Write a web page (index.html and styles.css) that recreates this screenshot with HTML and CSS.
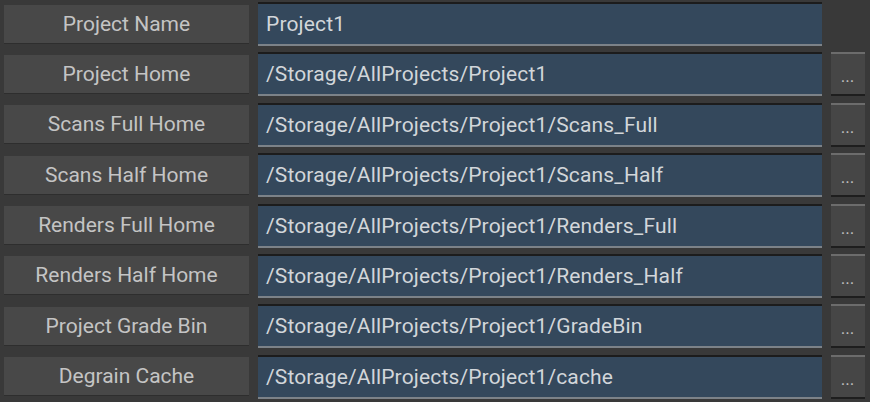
FILE: index.html
```html
<!DOCTYPE html>
<html lang="en">
<head>
<meta charset="UTF-8" />
<title>Project Settings</title>
<link rel="stylesheet" href="styles.css">
</head>
<body>
  <div class="settings">
    <div class="row">
      <div class="label">Project Name</div>
      <div class="field">Project1</div>
    </div>
    <div class="row">
      <div class="label">Project Home</div>
      <div class="field">/Storage/AllProjects/Project1</div>
      <button class="browse">...</button>
    </div>
    <div class="row">
      <div class="label">Scans Full Home</div>
      <div class="field">/Storage/AllProjects/Project1/Scans_Full</div>
      <button class="browse">...</button>
    </div>
    <div class="row">
      <div class="label">Scans Half Home</div>
      <div class="field">/Storage/AllProjects/Project1/Scans_Half</div>
      <button class="browse">...</button>
    </div>
    <div class="row">
      <div class="label">Renders Full Home</div>
      <div class="field">/Storage/AllProjects/Project1/Renders_Full</div>
      <button class="browse">...</button>
    </div>
    <div class="row">
      <div class="label">Renders Half Home</div>
      <div class="field">/Storage/AllProjects/Project1/Renders_Half</div>
      <button class="browse">...</button>
    </div>
    <div class="row">
      <div class="label">Project Grade Bin</div>
      <div class="field">/Storage/AllProjects/Project1/GradeBin</div>
      <button class="browse">...</button>
    </div>
    <div class="row">
      <div class="label">Degrain Cache</div>
      <div class="field">/Storage/AllProjects/Project1/cache</div>
      <button class="browse">...</button>
    </div>
  </div>
</body>
</html>
```

FILE: styles.css
```css
* {
  box-sizing: border-box;
}
html, body {
  margin: 0;
  padding: 0;
  height: 100%;
  background: #393939;
  font-family: Roboto, 'Liberation Sans', sans-serif;
}
.settings {
  display: flex;
  flex-direction: column;
  gap: 6.4px;
  padding: 2px 0 0 4px;
}
.row {
  display: flex;
  align-items: center;
  height: 44px;
}
.label {
  width: 245px;
  height: 39px;
  margin-right: 9px;
  background: #484848;
  border-bottom: 1px solid #2e2e2e;
  color: #c4c4c4;
  font-size: 21px;
  display: flex;
  justify-content: center;
  align-items: center;
}
.field {
  width: 564px;
  height: 44px;
  background: #34485c;
  border-top: 2px solid #1c1c1c;
  border-bottom: 2px solid #7c8288;
  color: #d2d6da;
  font-size: 21px;
  letter-spacing: 0.15px;
  padding-left: 8px;
  display: flex;
  align-items: center;
}
.browse {
  width: 34px;
  height: 44px;
  margin-left: 9px;
  padding: 0;
  background: #464646;
  border: none;
  border-top: 2px solid #6c6c6c;
  border-bottom: 2px solid #1e1e1e;
  color: #bcbcbc;
  font-family: inherit;
  font-size: 12px;
  font-weight: 700;
  letter-spacing: 1px;
  padding-top: 8px;
}
```
